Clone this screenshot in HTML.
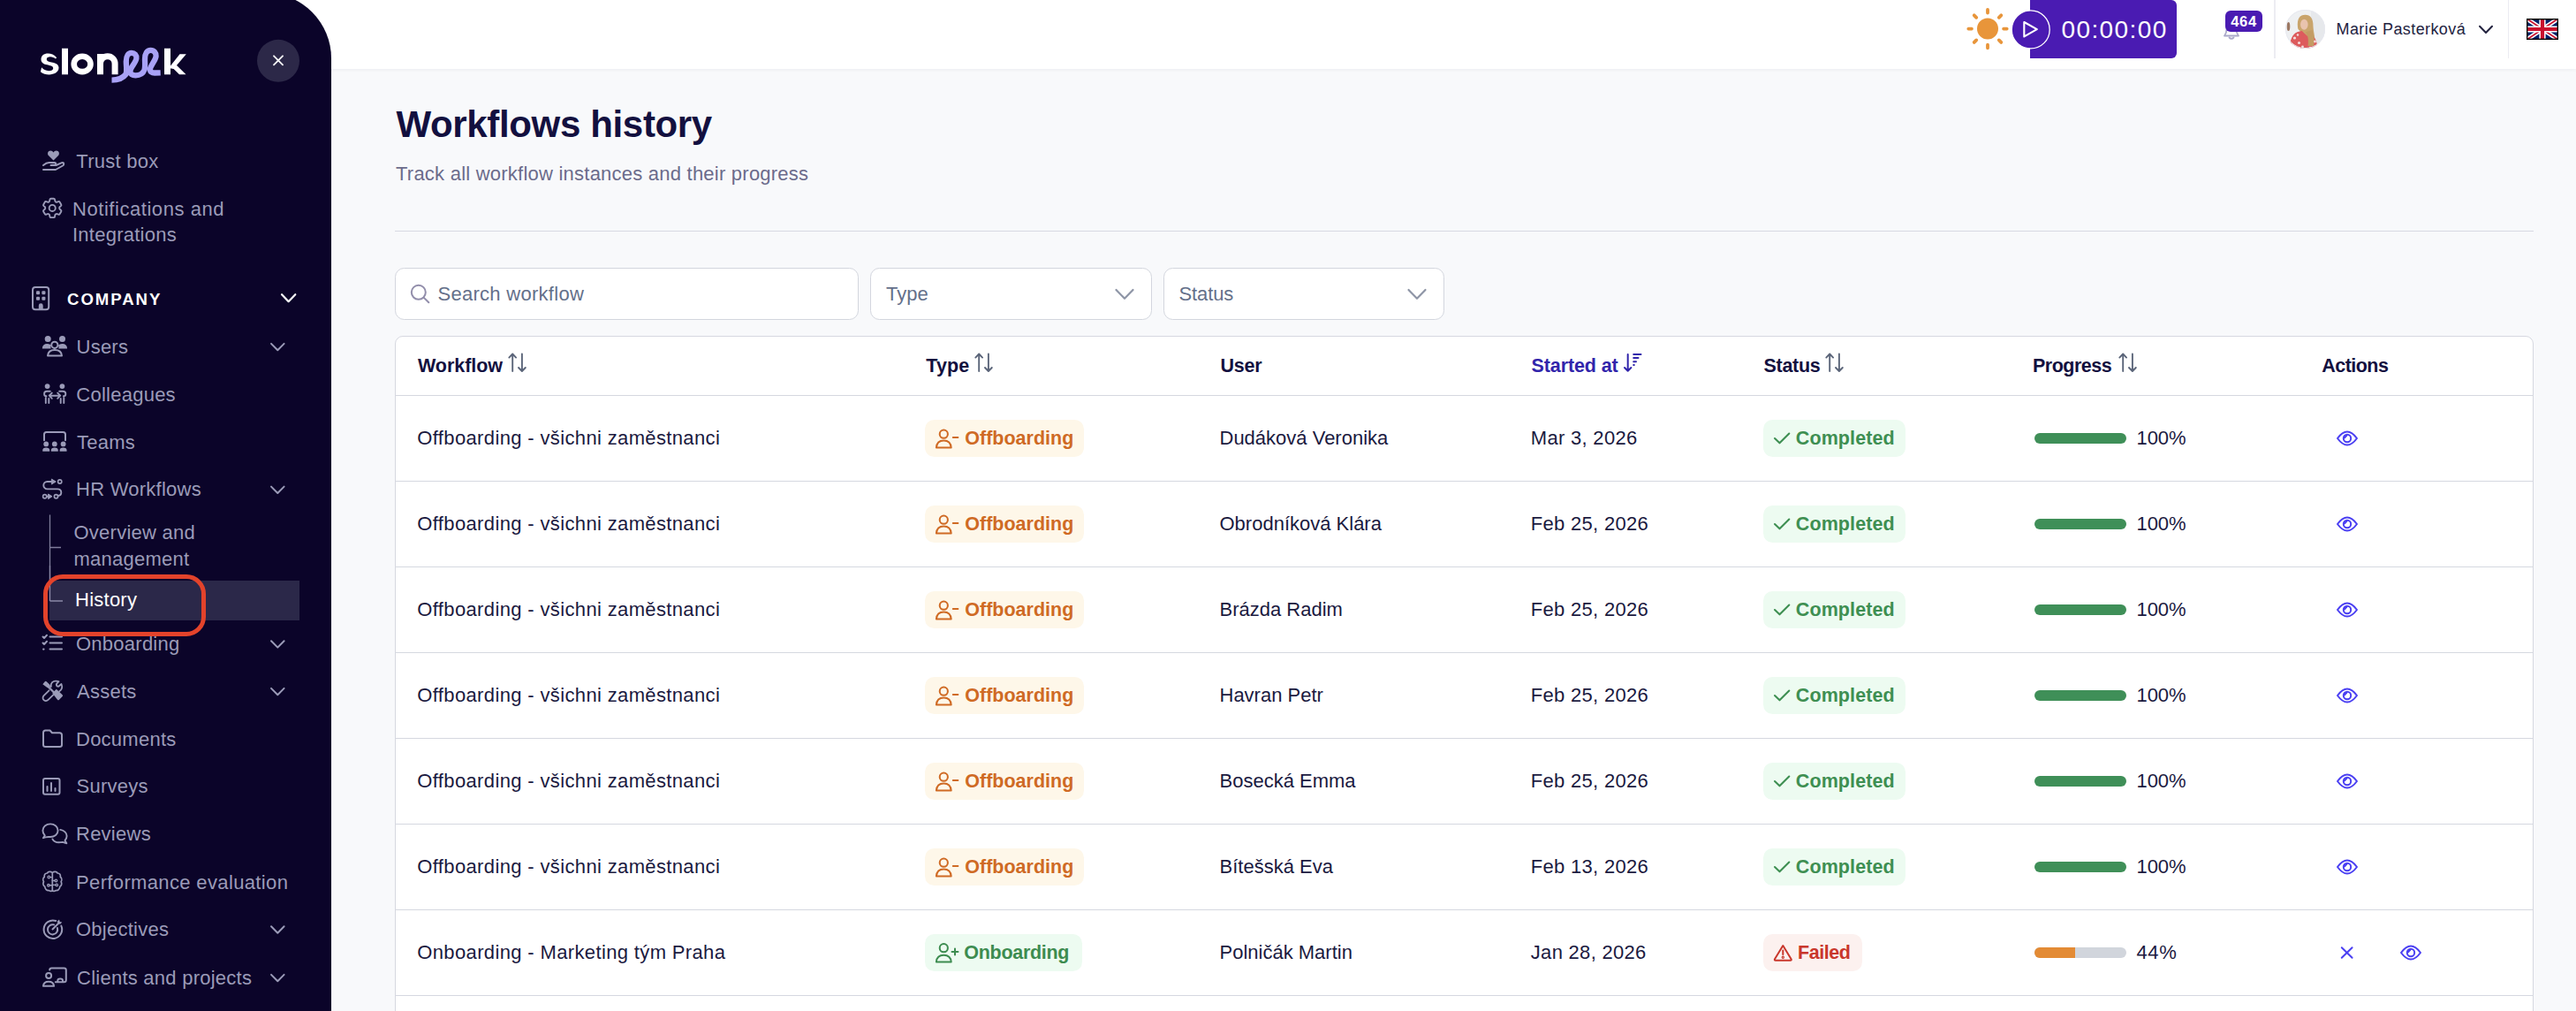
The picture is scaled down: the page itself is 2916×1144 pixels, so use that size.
<!DOCTYPE html>
<html><head><meta charset="utf-8">
<style>
*{box-sizing:border-box;margin:0;padding:0}
html,body{width:2916px;height:1144px;overflow:hidden;background:#f8f9fb;font-family:"Liberation Sans",sans-serif}
.a{position:absolute}
.t{position:absolute;white-space:nowrap;line-height:22px;font-size:22px}
#top{left:0;top:0;width:2916px;height:78px;background:#fff;box-shadow:0 1px 4px rgba(20,20,60,.06)}
#sb{left:0;top:-8px;width:375px;height:1170px;background:#0b0429;border-top-right-radius:74px}
.mi{color:#9b9bb8;letter-spacing:.25px}
.ic{position:absolute;fill:none;stroke:#9b9bb8;stroke-width:1.8;stroke-linecap:round;stroke-linejoin:round}
.chev{position:absolute;fill:none;stroke:#9b9bb8;stroke-width:2;stroke-linecap:round;stroke-linejoin:round}
.card{left:446.6px;top:379.8px;width:2421px;height:800px;background:#fff;border:1.5px solid #d6d8e0;border-radius:9px}
.hl{position:absolute;left:447.5px;width:2419px;height:1.5px;background:#d5d8e0}
.hd{color:#13103f;font-weight:700;font-size:21.5px;line-height:22px}
.cell{color:#1b1a3f;letter-spacing:.28px}
.badge{position:absolute;height:42px;border-radius:10.5px}
.bt{position:absolute;top:0;font-weight:700;font-size:21.5px;line-height:42px;white-space:nowrap}
.sort{position:absolute;fill:none;stroke:#5b6579;stroke-width:1.8;stroke-linecap:round;stroke-linejoin:round}
</style></head><body>
<div id="top" class="a"></div>
<div id="sb" class="a"></div>
<!-- SIDEBAR -->
<div id="side">
<svg class="a" style="left:0;top:0" width="375" height="1144" viewBox="0 0 375 1144">
<!-- logo -->
<g fill="#fff">
<path d="M64.2,65.2 C61.5,62 57.5,60.6 54.5,60.6 C49.5,60.6 46.5,63.2 46.5,67.2 C46.5,75.5 60.2,71.8 60.2,77.2 C60.2,79.2 58.2,80.2 55.3,80.2 C51.8,80.2 48.8,78.6 47.1,76.3 L45.9,81.2 C48.5,83.3 52.2,84.4 55.6,84.4 C61,84.4 66.5,82 66.5,76.6 C66.5,68.4 52.8,72.2 52.8,66.9 C52.8,65.2 54.5,64.3 56.9,64.3 C59.3,64.3 61.3,65.2 62.9,66.6 Z"/>
<rect x="70" y="54.75" width="7" height="29.55"/>
<rect x="186" y="54.75" width="7" height="29.55"/>
<path d="M191,77 L203.5,61.3 L210.8,61.3 L196.5,78 Z M197.5,71.5 L210.5,84.3 L203,84.3 L193,74.5 Z"/>
</g>
<ellipse cx="93.1" cy="72.45" rx="9.4" ry="8.7" fill="none" stroke="#fff" stroke-width="6.6"/>
<path d="M113.5,84.3 V61 M113.5,72 A8.3,8.3 0 0 1 130.1,72 V84.3" fill="none" stroke="#fff" stroke-width="7"/>
<path d="M126.5,90.6 C133,90.6 139.5,88 142.5,84 C144,80 142.8,75 142.8,69.5 C142.8,63 145.5,59.9 148.8,59.9 C152.5,59.9 154.8,62.5 154.4,66 C154,70.5 148,76 147.5,80 C147,84 150,85.3 153.5,85.3 C158,85.3 162,83 163.5,79 C164.5,76 164,72 164,67 C164,60.5 166.5,56.9 170.5,56.9 C174.5,56.9 176.8,60 176.6,63.5 C176.3,68 170.5,74 170,78 C169.7,81.5 172,82.5 175,82.5 L181.7,82.3" fill="none" stroke="#a8a1f6" stroke-width="6.3" stroke-linecap="butt" stroke-linejoin="round"/>
<!-- close -->
<circle cx="315" cy="68.8" r="24" fill="#2c2848"/>
<path d="M310,63.3 L320,73.3 M320,63.3 L310,73.3" stroke="#fff" stroke-width="1.8" stroke-linecap="round"/>

<g fill="none" stroke="#9b9bb8" stroke-width="2" stroke-linecap="round" stroke-linejoin="round">
<!-- trust box hand -->
<path d="M49,192 H63 L71,187.5 C73,186.3 72.5,183.5 70,184.2 L63.5,187 H57.5 L62,186.5 C63.8,186 63.5,183.8 61.5,184 H55.5 C52.5,184 50.5,185.7 49,187"/>
<!-- gear -->
<g transform="translate(45,221.2) scale(1.185)" stroke-width="1.6"><path d="M9.594 3.94c.09-.542.56-.94 1.11-.94h2.593c.55 0 1.02.398 1.11.94l.213 1.281c.063.374.313.686.645.87.074.04.147.083.22.127.325.196.72.257 1.075.124l1.217-.456a1.125 1.125 0 0 1 1.37.49l1.296 2.247a1.125 1.125 0 0 1-.26 1.431l-1.003.827c-.293.241-.438.613-.43.992a7.723 7.723 0 0 1 0 .255c-.008.378.137.75.43.991l1.004.827c.424.35.534.955.26 1.43l-1.298 2.247a1.125 1.125 0 0 1-1.369.491l-1.217-.456c-.355-.133-.75-.072-1.076.124a6.47 6.47 0 0 1-.22.128c-.331.183-.581.495-.644.869l-.213 1.281c-.09.543-.56.94-1.11.94h-2.594c-.55 0-1.019-.398-1.11-.94l-.213-1.281c-.062-.374-.312-.686-.644-.87a6.52 6.52 0 0 1-.22-.127c-.325-.196-.72-.257-1.076-.124l-1.217.456a1.125 1.125 0 0 1-1.369-.49l-1.297-2.247a1.125 1.125 0 0 1 .26-1.431l1.004-.827c.292-.24.437-.613.43-.991a6.932 6.932 0 0 1 0-.255c.007-.38-.138-.751-.43-.992l-1.004-.827a1.125 1.125 0 0 1-.26-1.43l1.297-2.247a1.125 1.125 0 0 1 1.37-.491l1.216.456c.356.133.751.072 1.076-.124.072-.044.146-.086.22-.128.332-.183.582-.495.644-.869l.214-1.28Z"/><path d="M15 12a3 3 0 1 1-6 0 3 3 0 0 1 6 0Z"/></g>
<path d="M55.2,777.6 L60.8,783.2" stroke-width="2.2"/><path d="M57.8,777 C57,773 60,770.3 63.5,770.6 L66.5,771.2 L63.8,774.2 C63.8,775.8 64.8,776.8 66.3,776.8 L69.5,774 C70.8,777.5 70,780.5 67.2,782.3 M55.5,781.3 L49.6,787.2 C48,788.8 48.3,791.2 49.8,792.3 C51.2,793.4 53.4,793.1 54.8,791.7 L60.2,786.3" stroke-width="1.8"/>
<!-- building -->
<rect x="37" y="325" width="18.2" height="25.3" rx="3"/>
<!-- users ring + body -->
<circle cx="61.85" cy="390.3" r="3.6"/>
<path d="M54,402.5 Q54.5,396 62,396 Q69.5,396 70,402.5 Z"/>
<!-- colleagues -->
<path d="M56.8,442.8 H53 Q50.1,442.8 50.1,445.5 V446 Q50.1,448.3 52.5,448.3 M51.8,450 V456 M55.3,451 V456 M67.2,442.8 H71 Q74.3,442.8 74.3,445.5 V446 Q74.3,448.3 71.9,448.3 M68.7,451 V456 M72.3,450 V456 M55.8,447.7 H68.2 M58.8,444.6 L55.7,447.7 L58.8,450.8 M65.2,444.6 L68.3,447.7 L65.2,450.8" stroke-width="1.9"/>
<!-- teams frame -->
<path d="M50,498.3 V491.5 Q50,489 52.5,489 H71.5 Q74,489 74,491.5 V498.3"/>
<!-- hr workflows -->
<path d="M59,545 H53.5 A4.2,4.2 0 0 0 53.5,553.4 H65 C68,553.4 69.3,555.5 69.3,557.5 C69.3,559.5 68,560.8 65.6,561 M52.8,561.7 H55.5" stroke-width="1.9"/>
<circle cx="67.7" cy="545" r="2.1" stroke-width="1.7"/>
<circle cx="50.7" cy="561.7" r="2.1" stroke-width="1.7"/>
<circle cx="63.5" cy="561.7" r="2.1" stroke-width="1.7"/>
<path d="M58.7,542.3 L63.2,545 L58.7,547.8 Z M54.9,559.2 L59,561.7 L54.9,564.4 Z" fill="#9b9bb8" stroke-width="1"/>
<!-- onboarding list -->
<path d="M48.5,720.5 L50,722 L53,718.8 M48.5,727.5 L50,729 L53,725.8 M56.5,720.6 H70 M56.5,727.6 H70 M56.5,734.6 H70"/>
<!-- folder -->
<path d="M49,843 V829 Q49,826.5 51.5,826.5 H56.5 L59,829.2 H67.5 Q70,829.2 70,831.7 V843 Q70,845 67.5,845 H51.5 Q49,845 49,843 Z"/>
<!-- surveys -->
<rect x="49" y="881" width="18.5" height="17.7" rx="2"/>
<path d="M53.5,895 V890 M58,895 V886 M62.5,895 V892"/>
<!-- reviews -->
<path d="M50.8,945.3 C49.2,943.7 48.4,941.8 48.4,939.7 C48.4,935.4 52.2,932.4 57,932.4 C61.8,932.4 65.6,935.4 65.6,939.7 C65.6,944 61.8,947 57,947 C55,947 53.2,946.8 51.6,947.3 L48.9,948.2 Z" stroke-width="1.9"/>
<path d="M68.2,938.9 C72.6,939.4 75.6,942.5 75.6,946 C75.6,948 74.8,949.8 73.5,951 L75.4,954.3 L71,952.9 C69.5,953.2 68,953.3 66.6,953.3 C63.2,953.3 60.6,951.8 59.4,949.4" stroke-width="1.9"/>
<!-- brain -->
<path d="M59.3,987.5 C57.5,985.8 54.5,986 53.5,988 C51,988 49.8,990 50.3,992.3 C48.6,993.5 48.3,996 49.5,997.7 C48.3,999.5 48.8,1002.3 50.8,1003.3 C50.8,1006 53,1008 55.5,1007.5 C57,1009 58.6,1008.5 59.3,1007.5 M59.3,987.5 C61.1,985.8 64.1,986 65.1,988 C67.6,988 68.8,990 68.3,992.3 C70,993.5 70.3,996 69.1,997.7 C70.3,999.5 69.8,1002.3 67.8,1003.3 C67.8,1006 65.6,1008 63.1,1007.5 C61.6,1009 60,1008.5 59.3,1007.5 M59.3,987.5 V1007.5" stroke-width="1.7"/>
<path d="M56.6,992.6 H59.3 M62.1,996.5 L59.3,996.5 M56.2,1001.8 H59.3 M62.9,1001.4 H59.3" stroke-width="1.4"/>
<circle cx="55.3" cy="992.5" r="1.3" stroke-width="1.3"/><circle cx="63.4" cy="996.5" r="1.3" stroke-width="1.3"/><circle cx="54.9" cy="1001.8" r="1.3" stroke-width="1.3"/><circle cx="64.2" cy="1001.4" r="1.3" stroke-width="1.3"/>
<!-- objectives -->
<path d="M69.3,1047.6 A10.3,10.3 0 1 1 63.2,1042" stroke-width="2"/>
<path d="M64.9,1050 A5.6,5.6 0 1 1 61.1,1046.4" stroke-width="2"/>
<path d="M59.5,1051.5 L66.5,1044.5" stroke-width="2"/>
<!-- clients -->
<circle cx="55.1" cy="1104" r="3"/>
<path d="M48.9,1115.8 Q49.5,1110.7 55,1110.7 Q60.5,1110.7 61.1,1115.8 Z M56.2,1097.6 Q56.2,1095.5 58.5,1095.5 H72.5 Q74.8,1095.5 74.8,1097.8 V1109 Q74.8,1111.3 72.5,1111.3 H62.8 M65.3,1111.3 V1109.6 Q65.3,1107.4 68.2,1107.4 Q71,1107.4 71,1109.6 V1111.3"/>
</g>
<g fill="#9b9bb8">
<path d="M60.5,181.5 L55.2,176.2 C53,174 54.2,170.4 57.2,170.4 C58.7,170.4 59.8,171.2 60.5,172.4 C61.2,171.2 62.3,170.4 63.8,170.4 C66.8,170.4 68,174 65.8,176.2 Z"/>
<rect x="41" y="329.2" width="4" height="4" rx="1"/><rect x="47.4" y="329.2" width="4" height="4" rx="1"/>
<rect x="41" y="335.8" width="4" height="4" rx="1"/><rect x="47.4" y="335.8" width="4" height="4" rx="1"/>
<path d="M43.8,350 V345.8 A2.45,2.45 0 0 1 48.7,345.8 V350 Z"/>
<circle cx="54.2" cy="383.6" r="3.5"/><circle cx="70.5" cy="383.6" r="3.5"/>
<path d="M47.8,394.5 Q48,389 53.5,389 Q56.5,389 58,390.8 Q57,392.5 57.5,394.5 Z"/>
<path d="M76.1,394.5 Q75.9,389 70.4,389 Q67.4,389 65.9,390.8 Q66.9,392.5 66.4,394.5 Z"/>
<circle cx="53.6" cy="437.1" r="2.9"/><circle cx="70.4" cy="437.1" r="2.9"/>
<circle cx="52.2" cy="502.4" r="2.9"/><circle cx="61.8" cy="502.4" r="2.9"/><circle cx="71.6" cy="502.4" r="2.9"/>
<path d="M48.3,510.8 Q47.6,506.5 52.2,506.5 Q56.8,506.5 56.1,510.8 Z M57.9,510.8 Q57.2,506.5 61.8,506.5 Q66.4,506.5 65.7,510.8 Z M67.7,510.8 Q67,506.5 71.6,506.5 Q76.2,506.5 75.5,510.8 Z"/>
<circle cx="49.3" cy="734.6" r="1.2"/>
<path d="M48.3,774.3 L50.8,771.3 Q51.7,770.5 52.7,771.2 L56.6,775 L57.2,777.2 L55.6,778.7 L53.4,778 Z M59.2,784.3 L63.8,779.8 L70.7,786.3 Q71.5,787.2 70.7,788 L66.8,791.9 Q66,792.7 65.2,791.9 Z"/>

<path d="M64.8,1042.5 L67,1040.5 L67.8,1043 L70.3,1043.6 L68.2,1045.8 L65.5,1045.3 Z"/>
</g>
<!-- chevrons -->
<g fill="none" stroke="#9b9bb8" stroke-width="2" stroke-linecap="round" stroke-linejoin="round">
<path d="M307,388.9 L314.3,396.3 L321.6,388.9"/>
<path d="M307,550.6 L314.3,558 L321.6,550.6"/>
<path d="M307,725.2 L314.3,732.6 L321.6,725.2"/>
<path d="M307,778.9 L314.3,786.3 L321.6,778.9"/>
<path d="M307,1048.3 L314.3,1055.7 L321.6,1048.3"/>
<path d="M307,1102.9 L314.3,1110.3 L321.6,1102.9"/>
</g>
<path d="M319,333.2 L326.6,341.2 L334.3,333.2" fill="none" stroke="#fff" stroke-width="2.2" stroke-linecap="round" stroke-linejoin="round"/>
<!-- tree -->
<path d="M56.5,582.5 V680 M56.5,619.5 H69 M56.5,680 H71" stroke="#7f7d9b" stroke-width="1.3" fill="none"/>
</svg>
<div class="a" style="left:56px;top:657.2px;width:283px;height:44.5px;background:#2b2849"></div>
<svg class="a" style="left:0;top:640px" width="375" height="90" viewBox="0 640 375 90"><path d="M56.5,640 V680 M56.5,680 H71" stroke="#8a88a6" stroke-width="1.3" fill="none"/></svg>
<div class="t mi" style="left:86.3px;top:171.8px">Trust box</div>
<div class="t mi" style="left:82px;top:225.6px;letter-spacing:.55px">Notifications and</div>
<div class="t mi" style="left:82px;top:255.4px">Integrations</div>
<div class="t" style="left:76px;top:327.7px;font-size:18.6px;font-weight:700;color:#fff;letter-spacing:1.95px">COMPANY</div>
<div class="t mi" style="left:86.5px;top:381.6px">Users</div>
<div class="t mi" style="left:86.3px;top:435.7px">Colleagues</div>
<div class="t mi" style="left:87px;top:489.7px">Teams</div>
<div class="t mi" style="left:86px;top:543.4px">HR Workflows</div>
<div class="t mi" style="left:83.5px;top:592.4px">Overview and</div>
<div class="t mi" style="left:83.5px;top:622px">management</div>
<div class="t" style="left:85px;top:667.8px;color:#fff;letter-spacing:.25px">History</div>
<div class="t mi" style="left:86px;top:718px">Onboarding</div>
<div class="t mi" style="left:87px;top:771.7px">Assets</div>
<div class="t mi" style="left:86px;top:825.6px">Documents</div>
<div class="t mi" style="left:86.5px;top:879.2px">Surveys</div>
<div class="t mi" style="left:86px;top:933.3px">Reviews</div>
<div class="t mi" style="left:86px;top:987.6px;letter-spacing:.36px">Performance evaluation</div>
<div class="t mi" style="left:86px;top:1041.1px">Objectives</div>
<div class="t mi" style="left:87px;top:1095.7px">Clients and projects</div>
<div class="a" style="left:49px;top:650px;width:184px;height:69.7px;border:5px solid #e3432b;border-radius:22px"></div>
</div>
<!-- TOPBAR -->
<div id="topbar">

<svg class="a" style="left:2220px;top:2px" width="62" height="62" viewBox="2220 2 62 62">
<circle cx="2250" cy="32.6" r="12" fill="#e8953a"/>
<g stroke="#e8953a" stroke-width="3.8" stroke-linecap="round">
<path d="M2250,10.9 V14.5 M2250,50.7 V54.3 M2228.3,32.6 H2231.9 M2268.1,32.6 H2271.7 M2234.7,17.3 L2237.2,19.8 M2262.8,45.4 L2265.3,47.9 M2265.3,17.3 L2262.8,19.8 M2237.2,45.4 L2234.7,47.9"/>
</g></svg>
<div class="a" style="left:2298px;top:0;width:166px;height:66px;background:#4a1bb2;border-radius:0 6px 6px 0"></div>
<svg class="a" style="left:2270px;top:5px" width="60" height="60" viewBox="2270 5 60 60">
<circle cx="2298.7" cy="33.4" r="21.5" fill="#4a1bb2" stroke="#fff" stroke-width="1.3"/>
<path d="M2291.3,25 L2305.8,33.2 L2291.3,41.4 Z" fill="none" stroke="#fff" stroke-width="2.1" stroke-linejoin="round"/>
</svg>
<div class="t" style="left:2333.5px;top:19.6px;font-size:28px;line-height:28px;color:#fff;letter-spacing:1.4px">00:00:00</div>
<svg class="a" style="left:2510px;top:10px" width="60" height="40" viewBox="2510 10 60 40">
<path d="M2518,40.5 H2534 Q2531.5,37.5 2531.5,33 V29 Q2531.5,22 2526,22 Q2520.5,22 2520.5,29 V33 Q2520.5,37.5 2518,40.5 Z" fill="none" stroke="#aaa9c9" stroke-width="1.8" stroke-linejoin="round"/>
<path d="M2523.5,42.5 Q2526,45 2528.5,42.5" fill="none" stroke="#aaa9c9" stroke-width="1.8" stroke-linecap="round"/>
</svg>
<div class="a" style="left:2519px;top:11.8px;width:42px;height:24.2px;background:#4a1bb2;border-radius:6px;color:#fff;font-weight:700;font-size:16.5px;line-height:24px;text-align:center;letter-spacing:.6px">464</div>
<div class="a" style="left:2574px;top:0;width:1.5px;height:66px;background:#ececf2"></div>
<div class="a" style="left:2587.4px;top:10.9px;width:44.2px;height:44.2px;border-radius:50%;overflow:hidden"><svg class="a" style="left:-1.4px;top:-0.9px" width="47" height="47" viewBox="2586 10 47 47">
<g>
<rect x="2586" y="10" width="47" height="47" fill="#eef0f2"/>
<rect x="2616" y="10" width="17" height="47" fill="#e6e8eb"/>
<ellipse cx="2590.5" cy="30" rx="1.8" ry="5" fill="#9c7863"/>
<path d="M2601,31 C2600,21 2603.5,16.8 2609.5,16.8 C2615.5,16.8 2618.5,21 2618.5,30 C2619,38 2621.5,44 2620,51 L2611,51 C2610,45 2609,40 2606,36 C2603,35 2601,33.5 2601,31 Z" fill="#c9a46c"/>
<ellipse cx="2608.3" cy="27.8" rx="4.3" ry="6" fill="#e9c3ae"/>
<path d="M2591.5,57 C2592,46 2594.5,38.5 2600.5,36.3 L2605.5,34.8 C2607.5,37 2609.5,38.5 2611.5,40.5 L2618.5,41.5 C2621.5,43.5 2623,48 2623.5,57 Z" fill="#dd5b5d"/>
<path d="M2609.5,36.5 C2612.5,39 2613.5,45 2612.5,52 L2619,52 C2620.5,46 2619.5,39.5 2617,34 Z" fill="#c39c64"/>
<g fill="#f4dede"><circle cx="2597.5" cy="43" r="1.6"/><circle cx="2602.5" cy="48.5" r="1.5"/><circle cx="2620.5" cy="47" r="1.4"/><circle cx="2595.5" cy="51.5" r="1.5"/><circle cx="2606.5" cy="53" r="1.4"/><circle cx="2601" cy="39.5" r="1.2"/><circle cx="2615" cy="54" r="1.3"/></g>
</g>
</svg></div>
<div class="a" style="left:2587.4px;top:10.9px;width:44.2px;height:44.2px;border-radius:50%;border:1px solid #e8e9f0"></div>
<div class="t" style="left:2644.5px;top:22.5px;font-size:18px;line-height:20px;color:#23233f;letter-spacing:.41px">Marie Pasterková</div>
<svg class="a" style="left:2800px;top:20px" width="30" height="30" viewBox="2800 20 30 30"><path d="M2807,29.8 L2814,37 L2821,29.8" fill="none" stroke="#23233f" stroke-width="2" stroke-linecap="round" stroke-linejoin="round"/></svg>
<div class="a" style="left:2838.8px;top:0;width:1.5px;height:66px;background:#ececf2"></div>
<svg class="a" style="left:2860px;top:21px" width="36" height="24" viewBox="0 0 60 40">
<rect width="60" height="40" fill="#012169"/>
<path d="M0,0 L60,40 M60,0 L0,40" stroke="#fff" stroke-width="8"/>
<path d="M0,0 L60,40 M60,0 L0,40" stroke="#C8102E" stroke-width="3"/>
<path d="M30,0 V40 M0,20 H60" stroke="#fff" stroke-width="12"/>
<path d="M30,0 V40 M0,20 H60" stroke="#C8102E" stroke-width="7"/>
<rect x="1" y="1" width="58" height="38" fill="none" stroke="#000" stroke-width="2.5"/>
</svg>

</div>
<!-- MAIN -->
<div id="main">
<div class="t" style="left:448.5px;top:120px;font-size:42px;line-height:42px;font-weight:700;color:#13103f;letter-spacing:-.35px">Workflows history</div>
<div class="t" style="left:448px;top:186px;color:#6b6b8b;letter-spacing:.23px">Track all workflow instances and their progress</div>
<div class="a" style="left:447px;top:260.5px;width:2421px;height:1.5px;background:#d7d9e2"></div>


<div class="a" style="left:447.4px;top:303px;width:524.3px;height:58.7px;background:#fff;border:1.5px solid #d3d6de;border-radius:10.5px"></div>
<svg class="a" style="left:460px;top:317px" width="30" height="30" viewBox="460 317 30 30"><circle cx="473.8" cy="330.8" r="8" fill="none" stroke="#928eab" stroke-width="2"/><path d="M479.6,336.6 L485.3,342.3" stroke="#928eab" stroke-width="2" stroke-linecap="round"/></svg>
<div class="t" style="left:495.5px;top:321.8px;color:#64708a;letter-spacing:.28px">Search workflow</div>
<div class="a" style="left:984.5px;top:303px;width:319.5px;height:58.7px;background:#fff;border:1.5px solid #d3d6de;border-radius:10.5px"></div>
<div class="t" style="left:1003px;top:321.6px;color:#64708a;letter-spacing:0">Type</div>
<svg class="a" style="left:1255px;top:320px" width="35" height="25" viewBox="1255 320 35 25"><path d="M1263.5,328 L1273,337.8 L1282.5,328" fill="none" stroke="#8e95a6" stroke-width="2.2" stroke-linecap="round" stroke-linejoin="round"/></svg>
<div class="a" style="left:1316.6px;top:303px;width:318px;height:58.7px;background:#fff;border:1.5px solid #d3d6de;border-radius:10.5px"></div>
<div class="t" style="left:1334.5px;top:321.6px;color:#64708a;letter-spacing:-.1px">Status</div>
<svg class="a" style="left:1586px;top:320px" width="35" height="25" viewBox="1586 320 35 25"><path d="M1594.5,328 L1604,337.8 L1613.5,328" fill="none" stroke="#8e95a6" stroke-width="2.2" stroke-linecap="round" stroke-linejoin="round"/></svg>
<div class="a card"></div>

<div class="t hd" style="left:473px;top:402.55px;color:#13103f;letter-spacing:-0.05px">Workflow</div>
<div class="t hd" style="left:1048.3px;top:402.55px;color:#13103f;letter-spacing:0.15px">Type</div>
<div class="t hd" style="left:1381.5px;top:402.55px;color:#13103f;letter-spacing:-0.2px">User</div>
<div class="t hd" style="left:1733.5px;top:402.55px;color:#3125ab;letter-spacing:-0.1px">Started at</div>
<div class="t hd" style="left:1996.5px;top:402.55px;color:#13103f;letter-spacing:-0.3px">Status</div>
<div class="t hd" style="left:2301px;top:402.55px;color:#13103f;letter-spacing:-0.5px">Progress</div>
<div class="t hd" style="left:2628.3px;top:402.55px;color:#13103f;letter-spacing:-0.55px">Actions</div>
<svg class="a" style="left:574px;top:397px" width="26" height="27" viewBox="574 397 26 27"><path d="M580.2,420 V401 M576.3,404.6 L580.2,400.5 L584.1,404.6 M590.9,400.5 V419.5 M587,416 L590.9,420 L594.8,416" fill="none" stroke="#5b6579" stroke-width="1.9" stroke-linecap="round" stroke-linejoin="round"/></svg>
<svg class="a" style="left:1102px;top:397px" width="26" height="27" viewBox="1102 397 26 27"><path d="M1108.2,420 V401 M1104.3,404.6 L1108.2,400.5 L1112.1,404.6 M1118.9,400.5 V419.5 M1115,416 L1118.9,420 L1122.8,416" fill="none" stroke="#5b6579" stroke-width="1.9" stroke-linecap="round" stroke-linejoin="round"/></svg>
<svg class="a" style="left:2065px;top:397px" width="26" height="27" viewBox="2065 397 26 27"><path d="M2071.2,420 V401 M2067.3,404.6 L2071.2,400.5 L2075.1,404.6 M2081.9,400.5 V419.5 M2078,416 L2081.9,420 L2085.8,416" fill="none" stroke="#5b6579" stroke-width="1.9" stroke-linecap="round" stroke-linejoin="round"/></svg>
<svg class="a" style="left:2397px;top:397px" width="26" height="27" viewBox="2397 397 26 27"><path d="M2403.2,420 V401 M2399.3,404.6 L2403.2,400.5 L2407.1,404.6 M2413.9,400.5 V419.5 M2410,416 L2413.9,420 L2417.8,416" fill="none" stroke="#5b6579" stroke-width="1.9" stroke-linecap="round" stroke-linejoin="round"/></svg>
<svg class="a" style="left:1834px;top:396px" width="30" height="28" viewBox="1834 396 30 28"><path d="M1842.7,401 V419.8 M1839,416 L1842.7,419.8 L1846.4,416 M1849.2,401 H1857.5 M1849.2,405 H1854.5 M1849.2,409.2 H1852 M1849.2,413.1 H1849.8" fill="none" stroke="#3125ab" stroke-width="2" stroke-linecap="round" stroke-linejoin="round"/></svg>
<div class="hl" style="top:446.8px"></div>
<div class="t cell" style="left:472.3px;top:484.58px;letter-spacing:.36px">Offboarding - všichni zaměstnanci</div>
<div class="badge" style="left:1047px;top:474.80px;width:179.7px;background:#fef7e9"></div>
<svg class="a" style="left:1055px;top:482.80px" width="34" height="26" viewBox="1055 482.80 34 26" fill="none" stroke="#cf6a24" stroke-width="2" stroke-linecap="round" stroke-linejoin="round"><circle cx="1068.3" cy="491.00" r="4.6"/><path d="M1059.9,506.30 Q1060.5,498.30 1068.3,498.30 Q1076.1,498.30 1076.7,506.30 Z M1078.8,494.70 H1084.4"/></svg>
<div class="t" style="left:1092.3px;top:484.75px;font-size:21.5px;font-weight:700;color:#cf6a24;letter-spacing:0">Offboarding</div>
<div class="t cell" style="left:1380.5px;top:484.58px;letter-spacing:0">Dudáková Veronika</div>
<div class="t cell" style="left:1732.8px;top:484.58px;letter-spacing:.3px">Mar 3, 2026</div>
<div class="badge" style="left:1996px;top:474.80px;width:160.8px;background:#edfbf1"></div>
<svg class="a" style="left:2004px;top:484.80px" width="26" height="22" viewBox="2004 484.80 26 22"><path d="M2009,495.80 L2014.5,501.10 L2025.3,490.30" fill="none" stroke="#3e8f52" stroke-width="2.1" stroke-linecap="round" stroke-linejoin="round"/></svg>
<div class="t" style="left:2032.8px;top:484.75px;font-size:21.5px;font-weight:700;color:#3e8f52;letter-spacing:.1px">Completed</div>
<div class="a" style="left:2302.5px;top:490.00px;width:104.7px;height:12.2px;border-radius:6px;background:#3f8f58"></div>
<div class="t cell" style="left:2418.5px;top:484.58px;letter-spacing:-.1px">100%</div>
<svg class="a" style="left:2642.9px;top:484.15px" width="28" height="24" viewBox="2642.9 484.15 28 24" fill="none" stroke="#4a3ff2" stroke-width="2" stroke-linecap="round" stroke-linejoin="round"><path d="M2645.9,496.15 Q2656.9,481.15 2667.9,496.15 Q2656.9,511.15 2645.9,496.15 Z"/><circle cx="2656.9" cy="496.15" r="4.2"/><path d="M2654.1,495.15 A3,3 0 0 1 2655.9,493.35" stroke-width="2.4"/></svg>
<div class="hl" style="top:543.80px"></div>
<div class="t cell" style="left:472.3px;top:581.58px;letter-spacing:.36px">Offboarding - všichni zaměstnanci</div>
<div class="badge" style="left:1047px;top:571.80px;width:179.7px;background:#fef7e9"></div>
<svg class="a" style="left:1055px;top:579.80px" width="34" height="26" viewBox="1055 579.80 34 26" fill="none" stroke="#cf6a24" stroke-width="2" stroke-linecap="round" stroke-linejoin="round"><circle cx="1068.3" cy="588.00" r="4.6"/><path d="M1059.9,603.30 Q1060.5,595.30 1068.3,595.30 Q1076.1,595.30 1076.7,603.30 Z M1078.8,591.70 H1084.4"/></svg>
<div class="t" style="left:1092.3px;top:581.75px;font-size:21.5px;font-weight:700;color:#cf6a24;letter-spacing:0">Offboarding</div>
<div class="t cell" style="left:1380.5px;top:581.58px;letter-spacing:0">Obrodníková Klára</div>
<div class="t cell" style="left:1732.8px;top:581.58px;letter-spacing:.3px">Feb 25, 2026</div>
<div class="badge" style="left:1996px;top:571.80px;width:160.8px;background:#edfbf1"></div>
<svg class="a" style="left:2004px;top:581.80px" width="26" height="22" viewBox="2004 581.80 26 22"><path d="M2009,592.80 L2014.5,598.10 L2025.3,587.30" fill="none" stroke="#3e8f52" stroke-width="2.1" stroke-linecap="round" stroke-linejoin="round"/></svg>
<div class="t" style="left:2032.8px;top:581.75px;font-size:21.5px;font-weight:700;color:#3e8f52;letter-spacing:.1px">Completed</div>
<div class="a" style="left:2302.5px;top:587.00px;width:104.7px;height:12.2px;border-radius:6px;background:#3f8f58"></div>
<div class="t cell" style="left:2418.5px;top:581.58px;letter-spacing:-.1px">100%</div>
<svg class="a" style="left:2642.9px;top:581.15px" width="28" height="24" viewBox="2642.9 581.15 28 24" fill="none" stroke="#4a3ff2" stroke-width="2" stroke-linecap="round" stroke-linejoin="round"><path d="M2645.9,593.15 Q2656.9,578.15 2667.9,593.15 Q2656.9,608.15 2645.9,593.15 Z"/><circle cx="2656.9" cy="593.15" r="4.2"/><path d="M2654.1,592.15 A3,3 0 0 1 2655.9,590.35" stroke-width="2.4"/></svg>
<div class="hl" style="top:640.80px"></div>
<div class="t cell" style="left:472.3px;top:678.58px;letter-spacing:.36px">Offboarding - všichni zaměstnanci</div>
<div class="badge" style="left:1047px;top:668.80px;width:179.7px;background:#fef7e9"></div>
<svg class="a" style="left:1055px;top:676.80px" width="34" height="26" viewBox="1055 676.80 34 26" fill="none" stroke="#cf6a24" stroke-width="2" stroke-linecap="round" stroke-linejoin="round"><circle cx="1068.3" cy="685.00" r="4.6"/><path d="M1059.9,700.30 Q1060.5,692.30 1068.3,692.30 Q1076.1,692.30 1076.7,700.30 Z M1078.8,688.70 H1084.4"/></svg>
<div class="t" style="left:1092.3px;top:678.75px;font-size:21.5px;font-weight:700;color:#cf6a24;letter-spacing:0">Offboarding</div>
<div class="t cell" style="left:1380.5px;top:678.58px;letter-spacing:0">Brázda Radim</div>
<div class="t cell" style="left:1732.8px;top:678.58px;letter-spacing:.3px">Feb 25, 2026</div>
<div class="badge" style="left:1996px;top:668.80px;width:160.8px;background:#edfbf1"></div>
<svg class="a" style="left:2004px;top:678.80px" width="26" height="22" viewBox="2004 678.80 26 22"><path d="M2009,689.80 L2014.5,695.10 L2025.3,684.30" fill="none" stroke="#3e8f52" stroke-width="2.1" stroke-linecap="round" stroke-linejoin="round"/></svg>
<div class="t" style="left:2032.8px;top:678.75px;font-size:21.5px;font-weight:700;color:#3e8f52;letter-spacing:.1px">Completed</div>
<div class="a" style="left:2302.5px;top:684.00px;width:104.7px;height:12.2px;border-radius:6px;background:#3f8f58"></div>
<div class="t cell" style="left:2418.5px;top:678.58px;letter-spacing:-.1px">100%</div>
<svg class="a" style="left:2642.9px;top:678.15px" width="28" height="24" viewBox="2642.9 678.15 28 24" fill="none" stroke="#4a3ff2" stroke-width="2" stroke-linecap="round" stroke-linejoin="round"><path d="M2645.9,690.15 Q2656.9,675.15 2667.9,690.15 Q2656.9,705.15 2645.9,690.15 Z"/><circle cx="2656.9" cy="690.15" r="4.2"/><path d="M2654.1,689.15 A3,3 0 0 1 2655.9,687.35" stroke-width="2.4"/></svg>
<div class="hl" style="top:737.80px"></div>
<div class="t cell" style="left:472.3px;top:775.58px;letter-spacing:.36px">Offboarding - všichni zaměstnanci</div>
<div class="badge" style="left:1047px;top:765.80px;width:179.7px;background:#fef7e9"></div>
<svg class="a" style="left:1055px;top:773.80px" width="34" height="26" viewBox="1055 773.80 34 26" fill="none" stroke="#cf6a24" stroke-width="2" stroke-linecap="round" stroke-linejoin="round"><circle cx="1068.3" cy="782.00" r="4.6"/><path d="M1059.9,797.30 Q1060.5,789.30 1068.3,789.30 Q1076.1,789.30 1076.7,797.30 Z M1078.8,785.70 H1084.4"/></svg>
<div class="t" style="left:1092.3px;top:775.75px;font-size:21.5px;font-weight:700;color:#cf6a24;letter-spacing:0">Offboarding</div>
<div class="t cell" style="left:1380.5px;top:775.58px;letter-spacing:0">Havran Petr</div>
<div class="t cell" style="left:1732.8px;top:775.58px;letter-spacing:.3px">Feb 25, 2026</div>
<div class="badge" style="left:1996px;top:765.80px;width:160.8px;background:#edfbf1"></div>
<svg class="a" style="left:2004px;top:775.80px" width="26" height="22" viewBox="2004 775.80 26 22"><path d="M2009,786.80 L2014.5,792.10 L2025.3,781.30" fill="none" stroke="#3e8f52" stroke-width="2.1" stroke-linecap="round" stroke-linejoin="round"/></svg>
<div class="t" style="left:2032.8px;top:775.75px;font-size:21.5px;font-weight:700;color:#3e8f52;letter-spacing:.1px">Completed</div>
<div class="a" style="left:2302.5px;top:781.00px;width:104.7px;height:12.2px;border-radius:6px;background:#3f8f58"></div>
<div class="t cell" style="left:2418.5px;top:775.58px;letter-spacing:-.1px">100%</div>
<svg class="a" style="left:2642.9px;top:775.15px" width="28" height="24" viewBox="2642.9 775.15 28 24" fill="none" stroke="#4a3ff2" stroke-width="2" stroke-linecap="round" stroke-linejoin="round"><path d="M2645.9,787.15 Q2656.9,772.15 2667.9,787.15 Q2656.9,802.15 2645.9,787.15 Z"/><circle cx="2656.9" cy="787.15" r="4.2"/><path d="M2654.1,786.15 A3,3 0 0 1 2655.9,784.35" stroke-width="2.4"/></svg>
<div class="hl" style="top:834.80px"></div>
<div class="t cell" style="left:472.3px;top:872.58px;letter-spacing:.36px">Offboarding - všichni zaměstnanci</div>
<div class="badge" style="left:1047px;top:862.80px;width:179.7px;background:#fef7e9"></div>
<svg class="a" style="left:1055px;top:870.80px" width="34" height="26" viewBox="1055 870.80 34 26" fill="none" stroke="#cf6a24" stroke-width="2" stroke-linecap="round" stroke-linejoin="round"><circle cx="1068.3" cy="879.00" r="4.6"/><path d="M1059.9,894.30 Q1060.5,886.30 1068.3,886.30 Q1076.1,886.30 1076.7,894.30 Z M1078.8,882.70 H1084.4"/></svg>
<div class="t" style="left:1092.3px;top:872.75px;font-size:21.5px;font-weight:700;color:#cf6a24;letter-spacing:0">Offboarding</div>
<div class="t cell" style="left:1380.5px;top:872.58px;letter-spacing:0">Bosecká Emma</div>
<div class="t cell" style="left:1732.8px;top:872.58px;letter-spacing:.3px">Feb 25, 2026</div>
<div class="badge" style="left:1996px;top:862.80px;width:160.8px;background:#edfbf1"></div>
<svg class="a" style="left:2004px;top:872.80px" width="26" height="22" viewBox="2004 872.80 26 22"><path d="M2009,883.80 L2014.5,889.10 L2025.3,878.30" fill="none" stroke="#3e8f52" stroke-width="2.1" stroke-linecap="round" stroke-linejoin="round"/></svg>
<div class="t" style="left:2032.8px;top:872.75px;font-size:21.5px;font-weight:700;color:#3e8f52;letter-spacing:.1px">Completed</div>
<div class="a" style="left:2302.5px;top:878.00px;width:104.7px;height:12.2px;border-radius:6px;background:#3f8f58"></div>
<div class="t cell" style="left:2418.5px;top:872.58px;letter-spacing:-.1px">100%</div>
<svg class="a" style="left:2642.9px;top:872.15px" width="28" height="24" viewBox="2642.9 872.15 28 24" fill="none" stroke="#4a3ff2" stroke-width="2" stroke-linecap="round" stroke-linejoin="round"><path d="M2645.9,884.15 Q2656.9,869.15 2667.9,884.15 Q2656.9,899.15 2645.9,884.15 Z"/><circle cx="2656.9" cy="884.15" r="4.2"/><path d="M2654.1,883.15 A3,3 0 0 1 2655.9,881.35" stroke-width="2.4"/></svg>
<div class="hl" style="top:931.80px"></div>
<div class="t cell" style="left:472.3px;top:969.58px;letter-spacing:.36px">Offboarding - všichni zaměstnanci</div>
<div class="badge" style="left:1047px;top:959.80px;width:179.7px;background:#fef7e9"></div>
<svg class="a" style="left:1055px;top:967.80px" width="34" height="26" viewBox="1055 967.80 34 26" fill="none" stroke="#cf6a24" stroke-width="2" stroke-linecap="round" stroke-linejoin="round"><circle cx="1068.3" cy="976.00" r="4.6"/><path d="M1059.9,991.30 Q1060.5,983.30 1068.3,983.30 Q1076.1,983.30 1076.7,991.30 Z M1078.8,979.70 H1084.4"/></svg>
<div class="t" style="left:1092.3px;top:969.75px;font-size:21.5px;font-weight:700;color:#cf6a24;letter-spacing:0">Offboarding</div>
<div class="t cell" style="left:1380.5px;top:969.58px;letter-spacing:0">Bítešská Eva</div>
<div class="t cell" style="left:1732.8px;top:969.58px;letter-spacing:.3px">Feb 13, 2026</div>
<div class="badge" style="left:1996px;top:959.80px;width:160.8px;background:#edfbf1"></div>
<svg class="a" style="left:2004px;top:969.80px" width="26" height="22" viewBox="2004 969.80 26 22"><path d="M2009,980.80 L2014.5,986.10 L2025.3,975.30" fill="none" stroke="#3e8f52" stroke-width="2.1" stroke-linecap="round" stroke-linejoin="round"/></svg>
<div class="t" style="left:2032.8px;top:969.75px;font-size:21.5px;font-weight:700;color:#3e8f52;letter-spacing:.1px">Completed</div>
<div class="a" style="left:2302.5px;top:975.00px;width:104.7px;height:12.2px;border-radius:6px;background:#3f8f58"></div>
<div class="t cell" style="left:2418.5px;top:969.58px;letter-spacing:-.1px">100%</div>
<svg class="a" style="left:2642.9px;top:969.15px" width="28" height="24" viewBox="2642.9 969.15 28 24" fill="none" stroke="#4a3ff2" stroke-width="2" stroke-linecap="round" stroke-linejoin="round"><path d="M2645.9,981.15 Q2656.9,966.15 2667.9,981.15 Q2656.9,996.15 2645.9,981.15 Z"/><circle cx="2656.9" cy="981.15" r="4.2"/><path d="M2654.1,980.15 A3,3 0 0 1 2655.9,978.35" stroke-width="2.4"/></svg>
<div class="hl" style="top:1028.80px"></div>
<div class="t cell" style="left:472.3px;top:1066.58px;letter-spacing:.36px">Onboarding - Marketing tým Praha</div>
<div class="badge" style="left:1047px;top:1056.80px;width:178.2px;background:#edfbf1"></div>
<svg class="a" style="left:1055px;top:1064.80px" width="34" height="26" viewBox="1055 1064.80 34 26" fill="none" stroke="#3d8c50" stroke-width="2" stroke-linecap="round" stroke-linejoin="round"><circle cx="1068.3" cy="1072.50" r="4.6"/><path d="M1059.9,1088.30 Q1060.5,1080.60 1068.3,1080.60 Q1076.1,1080.60 1076.7,1088.30 Z M1077.5,1076.80 H1084.5 M1081,1073.30 V1080.30"/></svg>
<div class="t" style="left:1091.3px;top:1066.75px;font-size:21.5px;font-weight:700;color:#3d8c50;letter-spacing:-.3px">Onboarding</div>
<div class="t cell" style="left:1380.5px;top:1066.58px;letter-spacing:0">Polničák Martin</div>
<div class="t cell" style="left:1732.8px;top:1066.58px;letter-spacing:.3px">Jan 28, 2026</div>
<div class="badge" style="left:1996.3px;top:1056.80px;width:111.4px;background:#fcf1ef"></div>
<svg class="a" style="left:2004px;top:1064.80px" width="28" height="26" viewBox="2004 1064.80 28 26" fill="none" stroke="#c9372c" stroke-width="2" stroke-linecap="round" stroke-linejoin="round"><path d="M2018.3,1069.80 L2027.6,1085.00 Q2028.3,1086.50 2026.6,1086.50 H2010 Q2008.3,1086.50 2009,1085.00 Z M2018.3,1075.30 V1079.80"/><circle cx="2018.3" cy="1083.00" r=".6" stroke-width="2.2"/></svg>
<div class="t" style="left:2035px;top:1066.75px;font-size:21.5px;font-weight:700;color:#c9372c;letter-spacing:-.45px">Failed</div>
<div class="a" style="left:2302.5px;top:1072.00px;width:104.7px;height:12.2px;border-radius:6px;background:#d1d5dc;overflow:hidden"><div style="width:46px;height:100%;background:#e38b35"></div></div>
<div class="t cell" style="left:2418.5px;top:1066.58px;letter-spacing:.6px">44%</div>
<svg class="a" style="left:2645px;top:1068.15px" width="24" height="20" viewBox="2645 1068.15 24 20"><path d="M2650.8,1072.35 L2662.6,1083.95 M2662.6,1072.35 L2650.8,1083.95" stroke="#4a3ff2" stroke-width="2" stroke-linecap="round"/></svg>
<svg class="a" style="left:2715px;top:1066.15px" width="28" height="24" viewBox="2715 1066.15 28 24" fill="none" stroke="#4a3ff2" stroke-width="2" stroke-linecap="round" stroke-linejoin="round"><path d="M2718,1078.15 Q2729,1063.15 2740,1078.15 Q2729,1093.15 2718,1078.15 Z"/><circle cx="2729" cy="1078.15" r="4.2"/><path d="M2726.2,1077.15 A3,3 0 0 1 2728,1075.35" stroke-width="2.4"/></svg>
<div class="hl" style="top:1125.80px"></div>
</div>
</body></html>
